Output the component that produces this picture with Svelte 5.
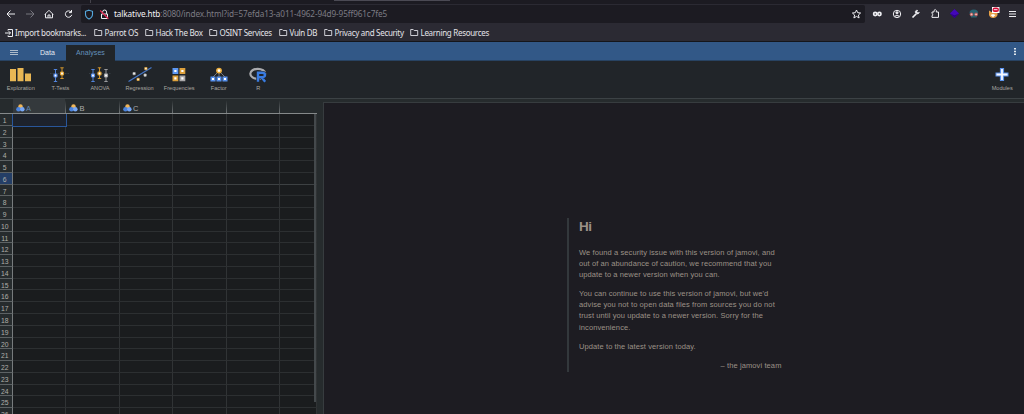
<script>
  const bookmarks = [
    { label: 'Parrot OS', w: 51 }, { label: 'Hack The Box', w: 64 },
    { label: 'OSINT Services', w: 70 }, { label: 'Vuln DB', w: 45 },
    { label: 'Privacy and Security', w: 86 }, { label: 'Learning Resources', w: 86 }
  ];
  const tools = ['Exploration', 'T-Tests', 'ANOVA', 'Regression', 'Frequencies', 'Factor', 'R'];
  const columns = ['A', 'B', 'C', '', '', ''];
  const rows = Array.from({ length: 26 }, (_, i) => i + 1);
</script>

{#snippet pin(x, y, color, top, bottom)}
  <path d="M{x} {top}V{bottom}M{x - 1.7} {top}h3.4M{x - 1.7} {bottom}h3.4" stroke={color} stroke-width=".9" fill="none" />
  <rect x={x - 1.5} y={y - 1.5} width="3" height="3" rx=".8" fill="#fff" stroke={color} stroke-width="1.2" />
{/snippet}

<div class="screen">
  <div class="tabs"><i></i><b></b></div>
  <div class="nav">
    <div class="left">
      <svg width="82" height="19" viewBox="0 0 82 19" fill="none" stroke="#eeeef2" stroke-width="1">
        <path d="M15 10H7M10.5 6.5 7 10l3.5 3.5" />
        <path d="M26 10h8M30.500 6.500 34 10l-3.500 3.500" stroke="#77767f" />
        <path d="m44.800 10.500 4.200-4.200 4.200 4.200M45.500 10v3.800h7V10M48 13.500v-2.500h2v2.500" />
        <path d="M71 8A3.200 3.200 0 1 0 71.700 10.800M71.500 6v2.600H69" />
      </svg>
    </div>
    <div class="url">
      <svg width="32" height="17" viewBox="0 0 32 17" fill="none">
        <path d="M8 4.200 11.500 5.300v3c0 2.400-1.400 3.800-3.500 4.800-2.100-1-3.500-2.400-3.500-4.800v-3Z" stroke="#54a8de" stroke-width="1.1" />
        <path d="M20.500 8h6v4.500h-6zM21.600 8V6a2 2 0 0 1 4 0v2" stroke="#eeeef2" />
        <path d="m19.200 4.500 8.200 8.200" stroke="#e22850" stroke-width="1.300" />
      </svg>
      <span class="address"><b>talkative.htb</b>:8080/index.html?id=57efda13-a011-4962-94d9-95ff961c7fe5</span>
      <svg class="star" width="16" height="17" viewBox="0 0 16 17" fill="none" stroke="#eeeef2"><path d="m7.500 4 1.200 2.700 2.900.3-2.200 2 .7 3-2.600-1.600L4.900 12l.7-3-2.200-2 2.900-.3Z" /></svg>
    </div>
    <svg class="ext" width="159" height="19" viewBox="865 4 159 19" fill="none" stroke="#eeeef2">
      <circle cx="875.200" cy="14" r="1.600" stroke-width="1.700" /><circle cx="879.400" cy="14" r="1.600" stroke-width="1.700" />
      <circle cx="897" cy="14" r="3.700" /><circle cx="897" cy="12.800" r="1.100" fill="#eeeef2" /><path d="M894.800 16.400q2.200-1.800 4.400 0" stroke-width="1.200" />
      <path d="m912.500 17.500 3.700-3.700" stroke-width="1.700" /><path d="M918 10.500c-2-1-3.500 1-2.500 2.500s3 1.300 4-.6l-2 .2-.8-1Z" fill="#eeeef2" stroke-width=".5" />
      <path d="M932 12h2v-1.500q1.500-2 2.300 0V12h2.200v5.400H932v-1.800q2.300-1 0-2Z" />
      <path d="m954.500 9 4.600 4.500-4.600 4.500-4.600-4.500Z" fill="#4307b9" stroke="none" /><path d="m949.900 13.500 4.600 1.800 4.600-1.800-4.600 4.500Z" fill="#300087" stroke="none" />
      <path d="M969.500 13q0-3.500 4.300-3.500t4.300 3.500l-1.500 4.500h-5.500Z" fill="#286371" stroke="none" /><circle cx="971.500" cy="14.400" r="1.400" fill="#f2c1b9" stroke="#bd4e50" stroke-width=".9" /><circle cx="976.100" cy="14.400" r="1.400" fill="#f2c1b9" stroke="#bd4e50" stroke-width=".9" />
      <path d="m989 10.500 2.500 1.500h3l3-1.500V15q-1 3-4.300 3t-4.200-3Z" fill="#e7a047" stroke="none" /><path d="m990.500 15 2.500-1 2.500 1-2.500 2.300Z" fill="#fff" stroke="none" />
      <path d="M992 7h7.500v6H992z" fill="#fff" stroke="none" /><rect x="992.500" y="7.500" width="6.500" height="4.600" rx="2.300" fill="#d80c36" stroke="none" /><path d="M993.800 9.700h3.700" />
      <path d="M1009 11.500h7M1009 14h7M1009 16.500h7" stroke-width="1" />
    </svg>
  </div>
  <div class="bookmarks">
    <svg class="import" width="9" height="10" viewBox="0 0 9 10" fill="none" stroke="#eeeef2"><path d="M3 2.500V1.500h4.500v7H3V7.500M0 5h5.500M3.700 3.200 5.500 5 3.700 6.800" /></svg>
    <span class="import-label">Import bookmarks...</span>
    {#each bookmarks as b}
      <div class="bookmark" style:width="{b.w}px">
        <svg width="9" height="9" viewBox="0 0 9 9" fill="none" stroke="#dedee4" stroke-width=".9"><path d="M.7 7.500V1.500h2.500l1 1h3.500v5H.7Z" /></svg>
        <span>{b.label}</span>
      </div>
    {/each}
  </div>
  <header>
    <svg width="28" height="18" stroke="#aebccb" fill="none"><path d="M10 8.500h8M10 10.500h8M10 12.500h8" stroke-width="1" /></svg>
    <span class="data">Data</span><span class="active">Analyses</span>
    <svg class="dots" width="8" height="18" fill="#e1e7ed"><path d="M3 6h2v1.500H3zM3 8.700h2v1.500H3zM3 11.400h2v1.500H3z" /></svg>
  </header>
  <div class="ribbon">
    {#each tools as tool, i}
      <div class="tool">
        <svg width="28" height="18" viewBox="0 0 28 18">
          {#if i === 0}
            <path d="M3 3h6v12.300H3zM10.500 2h6v13.300h-6zM18 7.500h6v7.800h-6z" fill="#e9b754" />
          {:else if i === 1}
            <path d="M4 7.500h20" stroke="#353d42" stroke-dasharray="1.500 1" />
            {@render pin(9.5, 9.500, '#558ceb', 3.500, 15.500)}{@render pin(16, 7.500, '#e3a12c', 1.800, 12.500)}
          {:else if i === 2}
            <path d="M3 7.500h22" stroke="#353d42" stroke-dasharray="1.500 1" />
            {@render pin(7, 9.500, '#558ceb', 3.500, 15.500)}{@render pin(13.500, 7.500, '#e3a12c', 1.800, 12.500)}{@render pin(20, 9.500, '#a4a5a7', 3.500, 15.500)}
          {:else if i === 3}
            <path d="m2.500 15.500 23-14" stroke="#4475c5" stroke-width="1.300" />
            <g fill="#fff" stroke-width=".8"><path d="M7 6.500h2.200v2.200H7zM18 8h2.200v2.200H18z" stroke="#aaa" /><path d="M11 12.300h2.200v2.200H11zM18.800 1.500H21v2.200h-2.200z" stroke="#dfa136" /></g>
          {:else if i === 4}
            <g fill="#fff" stroke-width="1.800"><path d="M8.400 3h4v4h-4z" stroke="#5d98f3" /><path d="M15.400 3h4v4h-4zM8.400 10.300h4v4h-4z" stroke="#dda13c" /><path d="M15.400 10.300h4v4h-4z" stroke="#aaa9aa" /></g>
          {:else if i === 5}
            <path d="M14 5 8 11M14 5v6M14 5l6 6" stroke="#8d8e90" stroke-width=".8" />
            <circle cx="14" cy="4.600" r="2.200" fill="#fff" stroke="#e9ab39" stroke-width="1.500" />
            <path d="M6.200 11.200h3.600v3.500H6.200zM12.200 11.200h3.600v3.500h-3.600zM18.200 11.200h3.600v3.500h-3.600z" fill="#fff" stroke="#568fea" stroke-width="1.500" />
          {:else}
            <ellipse cx="13.800" cy="7.800" rx="7.500" ry="5" fill="none" stroke="#aaabae" stroke-width="2.200" />
            <path d="M14 15.500V6.700h4.200q2.800.1 2.800 2.300T18.200 11.200H14m3.500 0 3.700 4.500" fill="none" stroke="#212529" stroke-width="3.500" />
            <path d="M14 15.700V6.700h4.200q2.800.1 2.800 2.300T18.200 11.200H14m3.500 0 3.700 4.500" fill="none" stroke="#397be0" stroke-width="2.400" />
          {/if}
        </svg>
        <span>{tool}</span>
      </div>
    {/each}
    <div class="tool modules">
      <svg width="28" height="18" viewBox="0 0 28 18"><path d="M14 2v13M7.500 8.500h13" stroke="#5c93ec" stroke-width="4.200" /><path d="M14 3v11M8.500 8.500h11" stroke="#f7faff" stroke-width="1.800" /></svg>
      <span>Modules</span>
    </div>
  </div>
  <main>
    <section class="sheet">
      <div class="heads">
        {#each columns as c, i}
          <div class:selected={i === 0}>
            {#if c}<svg width="9" height="8" viewBox="0 0 9 8"><circle cx="4.500" cy="2.400" r="2.200" fill="#efb65a" /><circle cx="2.500" cy="5.300" r="2.300" fill="#4c84dd" /><circle cx="6.300" cy="5.300" r="2.300" fill="#77a8f8" /></svg>{c}{/if}
          </div>
        {/each}
      </div>
      <div class="grid">
        {#each rows as r}
          <div class="row" class:current={r === 6}>
            <span>{r}</span>
            {#each columns as _, i}<div class="cell" class:focus={r === 1 && i === 0}></div>{/each}
          </div>
        {/each}
        <div class="scroll"></div>
      </div>
    </section>
    <section class="results">
      <article>
        <h1>Hi</h1>
        <p>We found a security issue with this version of jamovi, and<br />out of an abundance of caution, we recommend that you<br />update to a newer version when you can.</p>
        <p>You can continue to use this version of jamovi, but we'd<br />advise you not to open data files from sources you do not<br />trust until you update to a newer version. Sorry for the<br />inconvenience.</p>
        <p>Update to the latest version today.</p>
        <p class="sign">– the jamovi team</p>
      </article>
    </section>
  </main>
</div>

<style>
  :global(body) { margin: 0; background: #212529; }
  * { box-sizing: border-box; }
  svg { display: block; flex: none; }
  .screen { width: 1024px; height: 414px; overflow: hidden; display: flex; flex-direction: column; font-family: "Liberation Sans", Arial, sans-serif; white-space: nowrap; }
  .screen > * { flex: none; }
  .tabs { height: 4px; background: #1c1b22; display: flex; }
  .tabs i { width: 91px; border-right: 1px solid #44434b; height: 3px; }
  .tabs b { margin-left: 243px; width: 116px; height: 1px; background: #4b4a54; }
  .nav { height: 19px; background: #2b2a33; display: flex; }
  .left { width: 81px; }
  .left svg { width: 82px; }
  .url { width: 784px; height: 18px; margin-top: 1px; border-radius: 2px; background: #1c1b22; display: flex; align-items: center; font: 8.200px/18px "Noto Sans", sans-serif; color: #7d7c84; }
  .address { letter-spacing: -.11px; margin-left: 1px; }
  .address b { font-weight: 400; color: #f4f4f7; }
  .star { margin-left: auto; }
  .bookmarks { height: 19px; background: #2b2a33; border-bottom: 1px solid #15161b; display: flex; align-items: center; padding: 1px 0 0 5px; font: 8px/18px "Noto Sans", sans-serif; letter-spacing: -.3px; color: #e4e4e9; }
  .import-label { width: 79px; margin-left: 1px; }
  .bookmark { display: flex; align-items: center; gap: 1.500px; }
  header { height: 19px; background: #325887; border-bottom: 1px solid #284362; display: flex; font-size: 7px; line-height: 21px; color: #e4ebf2; }
  .data { width: 38px; padding-left: 12px; }
  .active { width: 49px; height: 16px; margin-top: 3px; line-height: 15px; background: #212529; text-align: center; color: #6391bd; letter-spacing: .05px; }
  .dots { margin-left: auto; margin-right: 5px; }
  .ribbon { height: 38px; background: #212529; border-bottom: 1px solid #3c4245; display: flex; padding: 5px 2px 0 1px; }
  .tool { width: 39.600px; display: flex; flex-direction: column; align-items: center; font-size: 5.600px; color: #a9a7a1; line-height: 8px; }
  .tool span { margin-top: -.5px; }
  .modules { margin-left: auto; }
  main { height: 315px; background: #262b2d; display: flex; }
  .sheet { width: 317px; flex: none; overflow: hidden; }
  .heads { height: 15px; padding-left: 12.500px; display: flex; border-bottom: 1px solid #85898a; }
  .heads div { flex: none; width: 53.550px; padding: 4px 0 0 3px; display: flex; gap: 1.500px; align-items: center; font-size: 7.500px; line-height: 9px; color: #acacaa; border-right: 1px solid; border-image: linear-gradient(#262b2d 15%, #74797b) 1; }
  .heads .selected { background: #34393c; color: #6388b4; }
  .grid { position: relative; height: 300px; overflow: hidden; background: #1a1c1e; }
  .row { height: 11.780px; display: flex; }
  .row > span { flex: none; width: 12.500px; background: #262b2d; border-right: 1px solid #777b7d; border-bottom: 1px solid #5d6264; color: #b0afaa; text-align: center; padding-right: 2px; font-size: 6.800px; line-height: 13px; }
  .cell { flex: none; width: 53.550px; border-right: 1px solid #303335; border-bottom: 1px solid #2c2f31; }
  .cell:last-child { width: 37px; }
  .focus { outline: 1px solid #29569a; border: 0; background: #1d222c; z-index: 1; }
  .current > span { background: #243e66; }
  .current .cell { border-bottom-color: #3d4143; }
  .scroll { position: absolute; right: 1px; top: 0; width: 2px; height: 288px; background: #44494c; }
  .results { margin: 3px 0 0 6px; flex: 1; background: #1d1c22; border: 1px solid #373c3f; border-width: 1px 0 0 1px; padding: 114px 0 0 243px; }
  article { width: 214.500px; height: 154px; border-left: 2px solid #33383c; padding-left: 10px; color: #9c9187; font-size: 7.500px; letter-spacing: .1px; line-height: 11.250px; }
  h1 { margin: 1px 0 11.500px; font-size: 13.500px; letter-spacing: -.5px; line-height: 17px; }
  p { margin: 0 0 7.700px; }
  .sign { text-align: right; }
</style>
